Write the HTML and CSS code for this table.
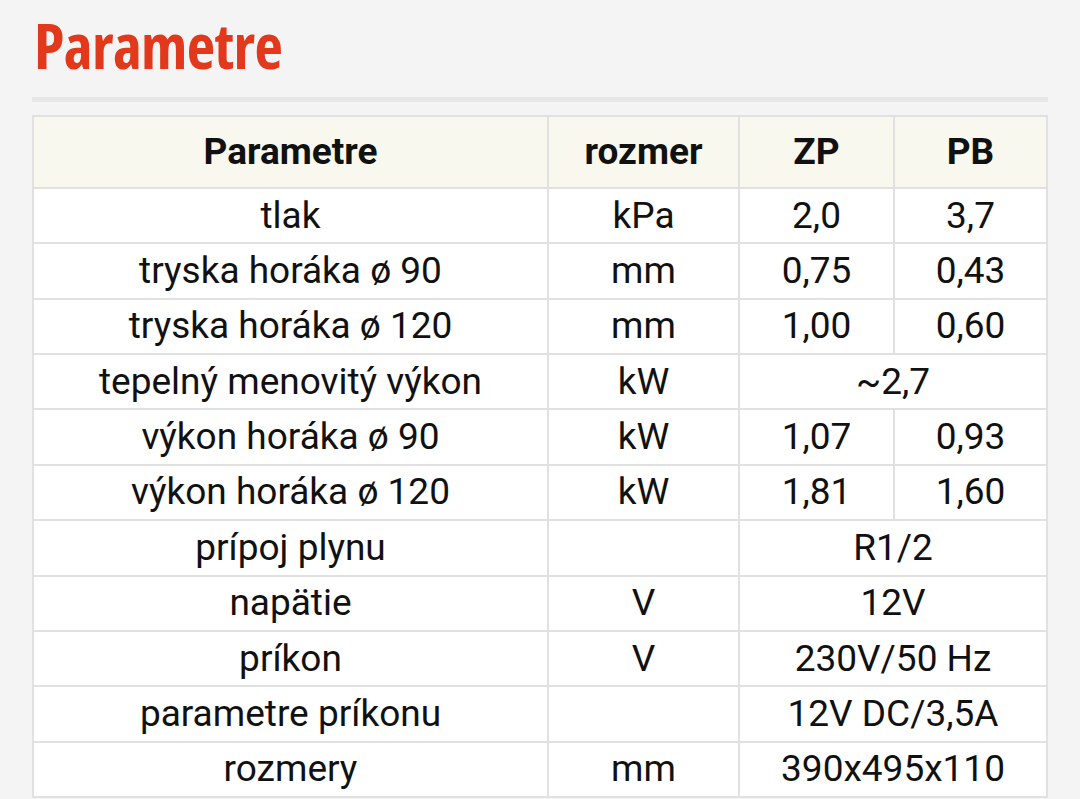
FILE: index.html
```html
<!DOCTYPE html>
<html lang="sk">
<head>
<meta charset="utf-8">
<title>Parametre</title>
<link rel="stylesheet" href="styles.css">
</head>
<body>
<div class="page">
  <h1 class="title">Parametre</h1>
  <div class="rule"></div>
  <table class="params">
    <colgroup>
      <col class="c1"><col class="c2"><col class="c3"><col class="c4">
    </colgroup>
    <thead>
      <tr class="head"><th>Parametre</th><th>rozmer</th><th>ZP</th><th>PB</th></tr>
    </thead>
    <tbody>
      <tr><td>tlak</td><td>kPa</td><td>2,0</td><td>3,7</td></tr>
      <tr><td>tryska horáka ø 90</td><td>mm</td><td>0,75</td><td>0,43</td></tr>
      <tr><td>tryska horáka ø 120</td><td>mm</td><td>1,00</td><td>0,60</td></tr>
      <tr><td>tepelný menovitý výkon</td><td>kW</td><td colspan="2">~2,7</td></tr>
      <tr><td>výkon horáka ø 90</td><td>kW</td><td>1,07</td><td>0,93</td></tr>
      <tr><td>výkon horáka ø 120</td><td>kW</td><td>1,81</td><td>1,60</td></tr>
      <tr><td>prípoj plynu</td><td></td><td colspan="2">R1/2</td></tr>
      <tr><td>napätie</td><td>V</td><td colspan="2">12V</td></tr>
      <tr><td>príkon</td><td>V</td><td colspan="2">230V/50 Hz</td></tr>
      <tr><td>parametre príkonu</td><td></td><td colspan="2">12V DC/3,5A</td></tr>
      <tr><td>rozmery</td><td>mm</td><td colspan="2">390x495x110</td></tr>
    </tbody>
  </table>
</div>
</body>
</html>
```
FILE: styles.css
```css
html, body {
  margin: 0;
  padding: 0;
  background: #f4f4f4;
}
.page {
  padding: 0 32px;
  width: 1016px;
}
.title {
  margin: 7px 0 0 2px;
  font-family: "Open Sans", "DejaVu Sans Condensed", sans-serif;
  font-stretch: 75%;
  font-weight: 700;
  font-size: 62px;
  line-height: 76px;
  color: #e2391c;
  letter-spacing: -0.6px;
}
.rule {
  margin-top: 14px;
  height: 5px;
  background: #e6e6e6;
}
.params {
  margin-top: 13px;
  width: 1016px;
  table-layout: fixed;
  border-collapse: separate;
  border-spacing: 0;
  border-top: 2px solid #e1e1e1;
  border-left: 2px solid #e1e1e1;
  font-family: Roboto, "Liberation Sans", sans-serif;
  font-size: 37px;
  color: #111;
}
.c1 { width: 515px; }
.c2 { width: 191px; }
.c3 { width: 155px; }
.c4 { width: 153px; }
.params th, .params td {
  border-right: 2px solid #e1e1e1;
  border-bottom: 2px solid #e1e1e1;
  text-align: center;
  vertical-align: middle;
  padding: 0;
  line-height: 40px;
}
.params th {
  background: #f8f8ef;
  font-weight: 700;
  height: 72px;
  box-sizing: border-box;
}
.params td {
  background: #fff;
  font-weight: 400;
  height: 55.36px;
  box-sizing: border-box;
}
```
